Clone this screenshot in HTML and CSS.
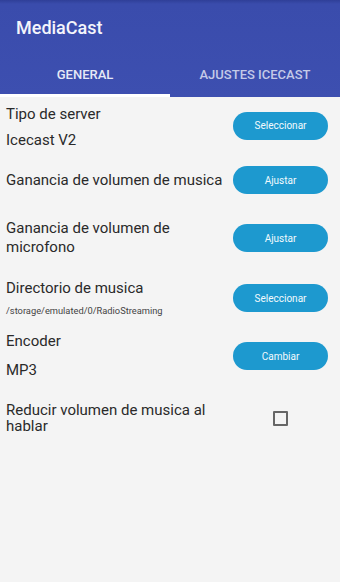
FILE: index.html
```html
<!DOCTYPE html>
<html>
<head>
<meta charset="utf-8">
<link rel="stylesheet" href="styles.css">
</head>
<body>
<div class="app">
  <header class="appbar">
    <div class="title">MediaCast</div>
    <nav class="tabs">
      <div class="tab active">GENERAL</div>
      <div class="tab">AJUSTES ICECAST</div>
    </nav>
  </header>
  <main class="content">
    <div class="row r1">
      <div class="label">
        <div class="line">Tipo de server</div>
        <div class="line value v1">Icecast V2</div>
      </div>
      <div class="action"><button class="btn">Seleccionar</button></div>
    </div>
    <div class="row r2">
      <div class="label">
        <div class="line">Ganancia de volumen de musica</div>
      </div>
      <div class="action"><button class="btn">Ajustar</button></div>
    </div>
    <div class="row r3">
      <div class="label">
        <div class="line wrap">Ganancia de volumen de microfono</div>
      </div>
      <div class="action"><button class="btn">Ajustar</button></div>
    </div>
    <div class="row r4">
      <div class="label">
        <div class="line">Directorio de musica</div>
        <div class="path">/storage/emulated/0/RadioStreaming</div>
      </div>
      <div class="action"><button class="btn">Seleccionar</button></div>
    </div>
    <div class="row r5">
      <div class="label">
        <div class="line">Encoder</div>
        <div class="line value v5">MP3</div>
      </div>
      <div class="action"><button class="btn">Cambiar</button></div>
    </div>
    <div class="row r6">
      <div class="label">
        <div class="line wrap tight">Reducir volumen de musica al hablar</div>
      </div>
      <div class="action"><span class="checkbox"></span></div>
    </div>
  </main>
</div>
</body>
</html>
```

FILE: styles.css
```css
* { box-sizing: border-box; }
html, body {
  margin: 0;
  padding: 0;
  width: 340px;
  height: 582px;
  background: #f4f4f4;
  font-family: Roboto, "Liberation Sans", Arial, sans-serif;
  overflow: hidden;
}
.app { width: 340px; height: 582px; background: #f4f4f4; }

.appbar {
  height: 97px;
  background: linear-gradient(#2f3f98 0, #3a4cac 4px, #3d4fb0 100%);
  display: flex;
  flex-direction: column;
}
.title {
  color: #f4f5fb;
  font-size: 18px;
  font-weight: 500;
  padding: 17px 0 0 16px;
  height: 58px;
}
.tabs {
  display: flex;
  height: 39px;
}
.tab {
  flex: 1;
  display: flex;
  align-items: center;
  justify-content: center;
  color: #c4cae8;
  font-size: 13px;
  font-weight: 500;
  padding-bottom: 3px;
  border-bottom: 3px solid transparent;
}
.tab.active {
  color: #e6e9f6;
  border-bottom-color: #ffffff;
}

.content {
  padding: 0 12px 0 6px;
}
.row {
  display: flex;
  align-items: center;
}
.label {
  width: 227px;
  color: #2a2a2a;
  font-size: 15px;
}
.line { line-height: 19px; }
.line.tight { line-height: 16px; }
.value.v1 { margin-top: 7px; }
.value.v5 { margin-top: 10px; }
.path {
  font-size: 9.3px;
  line-height: 12px;
  margin-top: 7px;
  color: #444;
}
.action {
  width: 95px;
  display: flex;
  justify-content: center;
}
.btn {
  width: 95px;
  height: 28px;
  border: none;
  border-radius: 14px;
  background: #1d99cf;
  color: #f2f9fd;
  font-family: Roboto, "Liberation Sans", Arial, sans-serif;
  font-size: 10px;
  padding: 0;
}
.checkbox {
  width: 15px;
  height: 15px;
  border: 2px solid #666;
  border-radius: 1px;
  display: block;
}

.r1 { margin-top: 8px; }
.r1 .action { margin-top: -4px; }
.r2 { margin-top: 16px; }
.r3 { margin-top: 25px; }
.r4 { margin-top: 22px; }
.r5 { margin-top: 15px; }
.r6 { margin-top: 22px; }
```
